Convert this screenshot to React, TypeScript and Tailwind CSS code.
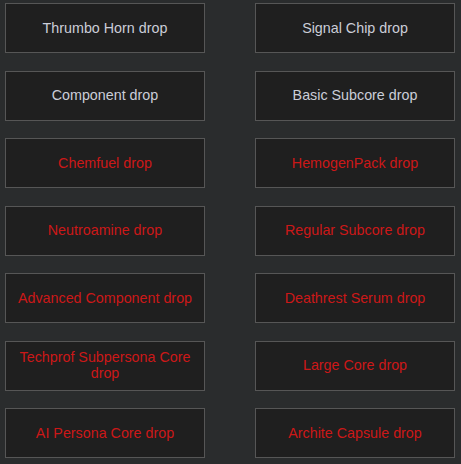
const ITEMS: { label: string; red?: boolean }[] = [
  { label: "Thrumbo Horn drop" },
  { label: "Signal Chip drop" },
  { label: "Component drop" },
  { label: "Basic Subcore drop" },
  { label: "Chemfuel drop", red: true },
  { label: "HemogenPack drop", red: true },
  { label: "Neutroamine drop", red: true },
  { label: "Regular Subcore drop", red: true },
  { label: "Advanced Component drop", red: true },
  { label: "Deathrest Serum drop", red: true },
  { label: "Techprof Subpersona Core drop", red: true },
  { label: "Large Core drop", red: true },
  { label: "AI Persona Core drop", red: true },
  { label: "Archite Capsule drop", red: true },
];

export default function App() {
  return (
    <div
      className="h-[464px] w-[461px] overflow-hidden bg-[#2a2c2d] pl-[5px] pt-[3px]"
      style={{ fontFamily: '"Liberation Sans", Arial, sans-serif' }}
    >
      <div className="grid grid-cols-[200px_200px] auto-rows-[50px] gap-x-[50px] gap-y-[17.5px]">
        {ITEMS.map((item) => (
          <div
            key={item.label}
            className={`flex items-center justify-center border border-[#565656] bg-[#1f1f1f] px-2 pb-px text-center text-[14.3px] leading-4 ${
              item.red ? "text-[#cc1818]" : "text-[#cbcdd8]"
            }`}
          >
            {item.label}
          </div>
        ))}
      </div>
    </div>
  );
}
